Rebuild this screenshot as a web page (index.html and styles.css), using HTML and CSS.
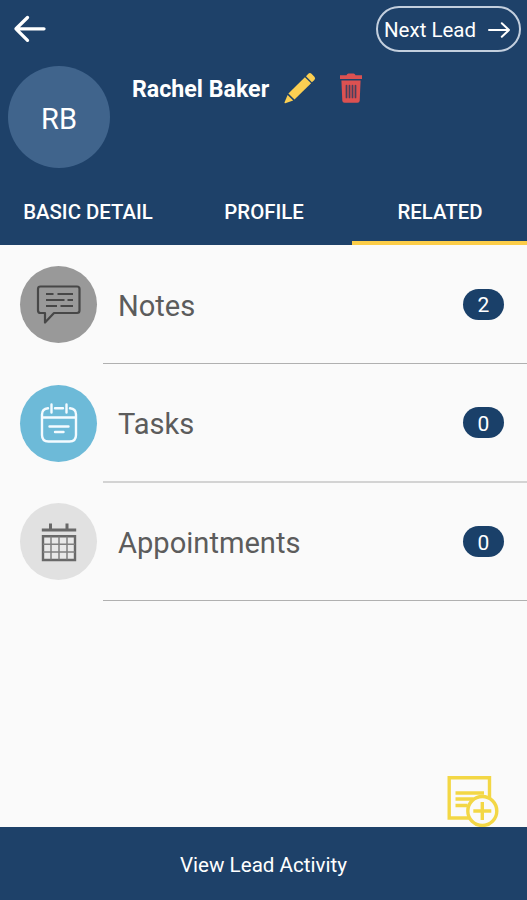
FILE: index.html
```html
<!DOCTYPE html>
<html lang="en">
<head>
  <meta charset="UTF-8">
  <meta name="viewport" content="width=device-width, initial-scale=1.0">
  <title>Lead Details</title>
  <link rel="stylesheet" href="styles.css">
</head>
<body>
  <header class="header">
    <!-- Top bar -->
    <div class="top-bar">
      <a class="back" href="#" aria-label="Back">
        <svg width="34" height="28" viewBox="0 0 34 28" fill="none" stroke="#fff" stroke-width="3.300" stroke-linecap="round" stroke-linejoin="round">
          <path d="M32 13.800H4M15.500 2.500L4 13.800l11.500 11.500"/>
        </svg>
      </a>
      <button class="next-btn">
        <span>Next Lead</span>
        <svg width="22" height="16" viewBox="0 0 22 16" fill="none" stroke="#fff" stroke-width="2" stroke-linecap="round" stroke-linejoin="round">
          <path d="M1 8h20M13.800 1.200L21 8l-7.200 6.800"/>
        </svg>
      </button>
    </div>

    <!-- Lead name and actions -->
    <div class="lead">
      <div class="avatar">RB</div>
      <div class="lead-info">
        <h1>Rachel Baker</h1>
        <svg class="edit" width="32" height="32" viewBox="0 0 32 32" fill="#fbcf52">
          <path d="M22 4.200L24.300 1.800q1.600-1.400 3.200 0l2.900 2.900q1.500 1.500 0 3.200l-2.500 2.400z"/>
          <path d="M20.900 5.200l6.200 6L10.500 27.600 4.400 21.600z"/>
          <path d="M3.600 22.900l5.600 5.600L1.300 31.200q-1 .2-.8-.8z"/>
        </svg>
        <svg class="delete" width="24" height="32" viewBox="0 0 24 32">
          <path fill="#dc5151" d="M1 3.300h6.500q.5-1.800 2-1.800h5q1.500 0 2 1.800H23v3.600H1zM2.400 8.400h19.200l-.9 20.400q-.2 2-2.200 2h-13q-2 0-2.200-2z"/>
          <path stroke="#4a3f5c" stroke-width="1.700" stroke-linecap="round" d="M7.500 13.500v12M10.500 13.500v12M13.500 13.500v12M16.500 13.500v12"/>
        </svg>
      </div>
    </div>

    <!-- Tabs -->
    <nav class="tabs">
      <a class="tab" href="#">BASIC DETAIL</a>
      <a class="tab" href="#">PROFILE</a>
      <a class="tab active" href="#">RELATED</a>
    </nav>
  </header>

  <main class="list">
    <div class="row">
      <div class="icon notes">
        <svg width="46" height="42" viewBox="0 0 46 42" fill="none" stroke="#474747" stroke-width="2.200">
          <path stroke-linejoin="round" d="M4.500 3.500h36.500q2.500 0 2.500 2.500v21.500q0 2.500-2.500 2.500H18L9 39.500V30H4.500Q2 30 2 27.500V6Q2 3.500 4.500 3.500z"/>
          <path d="M10 11h7.500M21.500 11H37M10 17h18.500M31.500 17h5.500M10 23h11M24.500 23h12.500"/>
        </svg>
      </div>
      <div class="row-body">
        <span class="label">Notes</span>
        <span class="badge">2</span>
      </div>
    </div>
    <div class="row">
      <div class="icon tasks">
        <svg width="38" height="42" viewBox="0 0 38 42" fill="none" stroke="#f4fbff" stroke-width="2.400" stroke-linecap="round">
          <path d="M8 6.300Q2 7 2 12.500v20.500q0 6.500 6.500 6.500h21q6.500 0 6.500-6.500V12.500q0-5.500-6-6.200M15 6.300h8M2 15.500h34M11.500 2.500v8M26.500 2.500v8M9.500 24.500h19M15 30h8.500"/>
        </svg>
      </div>
      <div class="row-body">
        <span class="label">Tasks</span>
        <span class="badge">0</span>
      </div>
    </div>
    <div class="row">
      <div class="icon appointments">
        <svg width="36" height="40" viewBox="0 0 36 40" fill="none" stroke="#696969">
          <path stroke-width="3" d="M9.500 1.500v6M26 1.500v6M.8 8h34.400"/>
          <path fill="#e8e8e8" stroke-width="2.400" d="M2 14.300h32v23.700H2z"/>
          <path stroke-width="1.500" stroke="#808080" d="M10 14.500v23M18 14.500v23M26 14.500v23M2 22.300h32M2 30h32"/>
        </svg>
      </div>
      <div class="row-body">
        <span class="label">Appointments</span>
        <span class="badge">0</span>
      </div>
    </div>
  </main>

  <!-- Add note button -->
  <a class="add-note" href="#" aria-label="Add note">
    <svg width="52" height="52" viewBox="0 0 52 52" fill="none" stroke="#f3d745" stroke-width="3.400">
      <path d="M2.200 2.700h40.300v40.300H2.200z"/>
      <path d="M8.500 18h28.500M8.500 24h18M8.500 30.500h12"/>
      <circle cx="35.300" cy="36" r="14.500" fill="#fafafa"/>
      <path d="M35.300 27v18M26.300 36h18"/>
    </svg>
  </a>

  <footer class="footer">View Lead Activity</footer>
</body>
</html>
```
FILE: styles.css
```css
/* General page styles */
* {
  box-sizing: border-box;
}

body {
  margin: 0;
  height: 100vh;
  display: flex;
  flex-direction: column;
  position: relative;
  overflow: hidden;
  background-color: #fafafa;
  font-family: Roboto, "Liberation Sans", sans-serif;
}

a {
  text-decoration: none;
}

svg {
  display: block;
}

/* Header */
.header {
  height: 245px;
  display: flex;
  flex-direction: column;
  background-color: #1e4169;
  color: #fff;
}

.top-bar {
  height: 58px;
  padding: 0 6px 0 12px;
  display: flex;
  justify-content: space-between;
  align-items: center;
}

.next-btn {
  width: 145px;
  height: 46px;
  padding: 2px 9px 0 6px;
  display: flex;
  justify-content: space-between;
  align-items: center;
  background: none;
  border: 2px solid #c3cfde;
  border-radius: 23px;
  color: #fff;
  font-family: inherit;
  font-size: 20.5px;
}

.next-btn svg {
  margin-top: -1px;
}

.lead {
  padding: 8px 8px 0;
  display: flex;
  align-items: flex-start;
}

.avatar {
  width: 102px;
  height: 102px;
  padding-top: 3px;
  display: flex;
  justify-content: center;
  align-items: center;
  border-radius: 50%;
  background-color: #40648c;
  font-size: 29px;
}

.lead-info {
  height: 44px;
  margin-left: 22px;
  display: flex;
  align-items: center;
}

h1 {
  margin: 0;
  padding-top: 1px;
  font-size: 23.2px;
  font-weight: 700;
}

.edit {
  margin-left: 15px;
  margin-top: -1px;
}

.delete {
  margin-left: 22.5px;
  margin-top: -1px;
}

/* Tabs */
.tabs {
  margin-top: auto;
  height: 67px;
  display: flex;
}

.tab {
  width: 176px;
  padding-top: 4px;
  display: flex;
  justify-content: center;
  align-items: center;
  border-bottom: 4px solid transparent;
  color: #fff;
  font-size: 20.4px;
  font-weight: 500;
  flex-shrink: 0;
}

.tab.active {
  border-bottom-color: #fccd48;
}

/* Related list */
.list {
  flex: 1;
}

.row {
  height: 118.8px;
  padding-left: 20px;
  display: flex;
  align-items: center;
}

.icon {
  width: 77px;
  height: 77px;
  display: flex;
  justify-content: center;
  align-items: center;
  border-radius: 50%;
}

.notes {
  background-color: #999;
}

.tasks {
  background-color: #6dbad8;
}

.appointments {
  background-color: #e1e1e1;
}

.row-body {
  flex: 1;
  height: 100%;
  margin-left: 6px;
  padding: 0 23px 0 15px;
  display: flex;
  justify-content: space-between;
  align-items: center;
  border-bottom: 1px solid #b0b0b0;
}

.row:nth-child(2) .row-body {
  border-bottom: 2px solid #d3d3d3;
}

.label {
  padding-top: 4px;
  color: #5c5c5c;
  font-size: 29.1px;
}

.badge {
  width: 41px;
  height: 31px;
  margin-top: 1px;
  padding-top: 2px;
  display: flex;
  justify-content: center;
  align-items: center;
  border-radius: 15.5px;
  background-color: #1a4069;
  color: #fff;
  font-size: 21px;
}

/* Add note button floats over the list and the footer edge */
.add-note {
  position: absolute;
  right: 28px;
  bottom: 73px;
}

/* Footer */
.footer {
  height: 73px;
  padding-top: 3px;
  display: flex;
  justify-content: center;
  align-items: center;
  background-color: #1e4169;
  color: #fff;
  font-size: 20.6px;
}
```
